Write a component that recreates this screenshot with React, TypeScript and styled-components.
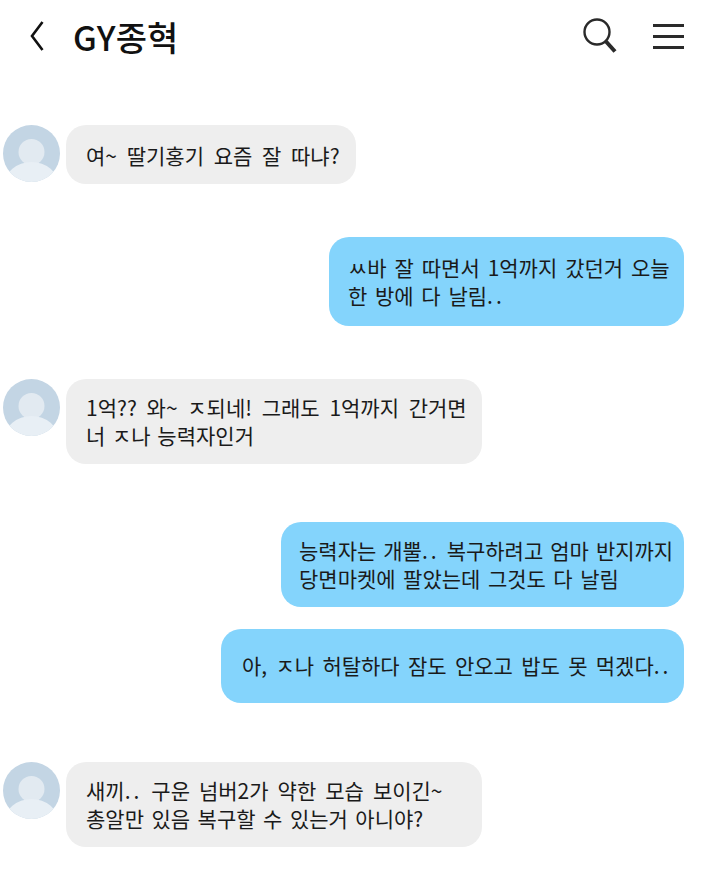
import styled, { createGlobalStyle } from "styled-components";

const GlobalStyle = createGlobalStyle`
  html, body {
    margin: 0;
    padding: 0;
    background: #fff;
  }
  body {
    font-family: "Noto Sans CJK KR", "Noto Sans", sans-serif;
  }
`;

type TextLine = { text: string; spacing: number };
type Msg = {
  side: "in" | "out";
  lines: TextLine[];
  width: number;
  height: number;
  gap: number;
  pad: number;
  bottom: number;
};

const messages: Msg[] = [
  { side: "in", width: 290, height: 59, gap: 0, pad: 20, bottom: 0, lines: [{ text: "여~ 딸기홍기 요즘 잘 따냐?", spacing: 5 }] },
  {
    side: "out",
    width: 355,
    height: 89,
    gap: 53,
    pad: 19,
    bottom: 2,
    lines: [
      { text: "ㅆ바 잘 따면서 1억까지 갔던거 오늘", spacing: 3.2 },
      { text: "한 방에 다 날림..", spacing: 3 },
    ],
  },
  {
    side: "in",
    width: 416,
    height: 85,
    gap: 53,
    pad: 20,
    bottom: 2,
    lines: [
      { text: "1억?? 와~ ㅈ되네! 그래도 1억까지 간거면", spacing: 5 },
      { text: "너 ㅈ나 능력자인거", spacing: 2 },
    ],
  },
  {
    side: "out",
    width: 403,
    height: 85,
    gap: 58,
    pad: 18,
    bottom: 2,
    lines: [
      { text: "능력자는 개뿔.. 복구하려고 엄마 반지까지", spacing: 2.3 },
      { text: "당면마켓에 팔았는데 그것도 다 날림", spacing: 2.8 },
    ],
  },
  {
    side: "out",
    width: 463,
    height: 74,
    gap: 22,
    pad: 21,
    bottom: 2,
    lines: [{ text: "아, ㅈ나 허탈하다 잠도 안오고 밥도 못 먹겠다..", spacing: 3.6 }],
  },
  {
    side: "in",
    width: 416,
    height: 85,
    gap: 59,
    pad: 20,
    bottom: 2,
    lines: [
      { text: "새끼.. 구운 넘버2가 약한 모습 보이긴~", spacing: 4.3 },
      { text: "총알만 있음 복구할 수 있는거 아니야?", spacing: 2.8 },
    ],
  },
];

const App = () => {
  return (
    <Page>
      <GlobalStyle />
      <Header>
        <BackIcon width="14" height="32" viewBox="0 0 14 32">
          <path d="M12.5 2 L2 16 L12.5 30" />
        </BackIcon>
        <Title>GY종혁</Title>
        <Actions>
          <SearchIcon width="36" height="38" viewBox="0 0 36 38">
            <circle cx="15" cy="15" r="12.5" />
            <HandlePath d="M24 24.5 L33 34.5" />
          </SearchIcon>
          <Menu>
            <span />
            <span />
            <span />
          </Menu>
        </Actions>
      </Header>
      <Chat>
        {messages.map((m, i) => (
          <Row key={i} $side={m.side} $gap={m.gap}>
            {m.side === "in" && (
              <Avatar width="57" height="57" viewBox="0 0 57 57">
                <defs>
                  <clipPath id={`a${i}`}>
                    <circle cx="28.5" cy="28.5" r="28.5" />
                  </clipPath>
                </defs>
                <circle cx="28.5" cy="28.5" r="28.5" fill="#c3d5e4" />
                <g clipPath={`url(#a${i})`}>
                  <circle cx="28.5" cy="27" r="13" fill="#e2eaf1" />
                  <ellipse cx="28.5" cy="60" rx="27" ry="23" fill="#e8eff5" />
                </g>
              </Avatar>
            )}
            <Bubble $side={m.side} $w={m.width} $h={m.height} $pad={m.pad} $bottom={m.bottom}>
              {m.lines.map((l) => (
                <Line key={l.text} $spacing={l.spacing}>
                  {l.text.split("..").map((part, j) => (
                    <span key={j}>
                      {j > 0 && <Dots>..</Dots>}
                      {part}
                    </span>
                  ))}
                </Line>
              ))}
            </Bubble>
          </Row>
        ))}
      </Chat>
    </Page>
  );
};

const Page = styled.div`
  width: 703px;
  height: 873px;
  background: #fff;
  overflow: hidden;
`;

const Header = styled.header`
  display: flex;
  align-items: center;
  height: 72px;
  padding: 0 19px 0 30px;
  box-sizing: border-box;
`;

const BackIcon = styled.svg`
  fill: none;
  stroke: #111;
  stroke-width: 2.6;
`;

const Title = styled.h1`
  margin: 0 0 0 29px;
  font-size: 34px;
  font-weight: 500;
  color: #111;
`;

const Actions = styled.div`
  display: flex;
  align-items: center;
  gap: 35px;
  margin-left: auto;
`;

const SearchIcon = styled.svg`
  fill: none;
  stroke: #2a2a2a;
  stroke-width: 2.4;
`;

const HandlePath = styled.path`
  stroke-width: 4;
`;

const Menu = styled.div`
  display: flex;
  flex-direction: column;
  gap: 8px;
  width: 31px;

  span {
    display: block;
    height: 3px;
    background: #2a2a2a;
  }
`;

const Chat = styled.main`
  display: flex;
  flex-direction: column;
  padding: 53px 19px 0 3px;
`;

const Row = styled.div<{ $side: "in" | "out"; $gap: number }>`
  display: flex;
  align-items: flex-start;
  gap: 6px;
  justify-content: ${(p) => (p.$side === "out" ? "flex-end" : "flex-start")};
  margin-top: ${(p) => p.$gap}px;
`;

const Avatar = styled.svg`
  flex: none;
`;

const Bubble = styled.div<{ $side: "in" | "out"; $w: number; $h: number; $pad: number; $bottom: number }>`
  display: flex;
  flex-direction: column;
  justify-content: center;
  box-sizing: border-box;
  width: ${(p) => p.$w}px;
  height: ${(p) => p.$h}px;
  padding: 0 0 ${(p) => p.$bottom}px ${(p) => p.$pad}px;
  border-radius: 20px;
  background: ${(p) => (p.$side === "out" ? "#84d4fc" : "#eeeeee")};
`;

const Line = styled.div<{ $spacing: number }>`
  font-size: 21px;
  line-height: 28px;
  color: #1a1a1a;
  white-space: nowrap;
  word-spacing: ${(p) => p.$spacing}px;
`;

const Dots = styled.span`
  letter-spacing: 3px;
`;

export default App;
